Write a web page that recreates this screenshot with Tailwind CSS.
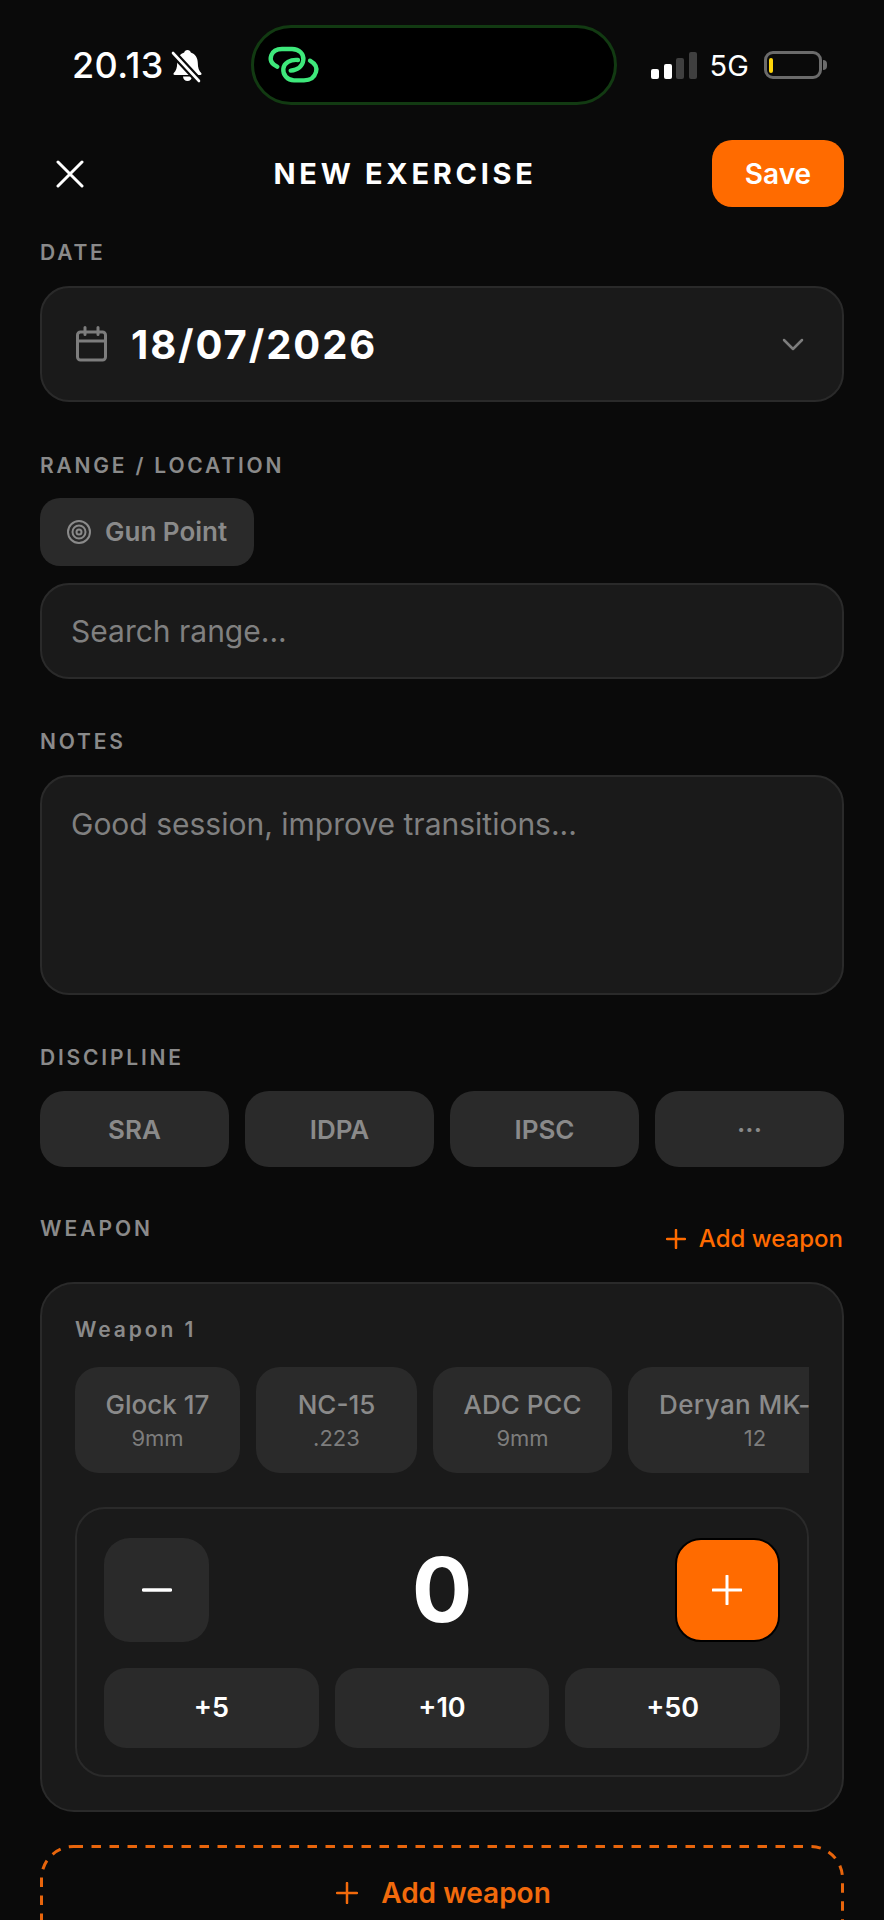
<!DOCTYPE html>
<html lang="en">
  <head>
    <meta charset="UTF-8" />
    <meta name="viewport" content="width=device-width, initial-scale=1.0" />
    <title>New Exercise</title>
    <script src="https://cdn.jsdelivr.net/npm/@tailwindcss/browser@4"></script>
  </head>
  <body class="bg-[#0a0a0a]">
    <div class="h-[1920px] w-[884px] overflow-hidden bg-[#0a0a0a] px-[40px] font-['Inter',sans-serif] text-white">
      <!-- status bar -->
      <div class="-mx-[40px] flex h-[105px] items-end">
        <div class="flex h-[80px] w-full items-center">
          <span class="ml-[72px] w-[92px] text-[36px] leading-none font-medium tracking-[0.400px]">20.13</span>
          <svg class="mt-[2px] h-[44px] w-[44px]" viewBox="0 0 44 44">
            <path d="M23.500 6c1.800 0 3 1 3.300 2.500 4.700 1.500 7 5.500 7 10.500 0 5 1.200 7.800 3.400 10 .8.900.3 2-.9 2H10.700c-1.200 0-1.700-1.100-.9-2 2.200-2.200 3.400-5 3.400-10 0-5 2.300-9 7-10.500.3-1.500 1.500-2.500 3.300-2.500z" fill="#fff"/>
            <path d="M19 32.500h9c0 2.600-2 4.500-4.500 4.500S19 35.100 19 32.500z" fill="#fff"/>
            <path d="M9 9l26 28" stroke="#0a0a0a" stroke-width="7"/>
            <path d="M9 9l26 28" stroke="#fff" stroke-width="2.600" stroke-linecap="round"/>
          </svg>
          <div class="ml-[43px] flex h-[80px] w-[366px] items-center rounded-full border-[3px] border-[#123a12] bg-black pl-[8px]">
            <svg class="h-[50px] w-[64px]" viewBox="0 0 192 150" fill="none" stroke="#3ee87b" stroke-width="13" stroke-linecap="round">
              <path d="M46 80C28 72 23 60 28 46C33 32 45 27 60 27L90 27C112 27 126 42 124 60C122 78 108 90 86 92"/>
              <path d="M108 60C85 58 66 68 64 86C62 104 76 121 96 121L126 121C146 121 158 110 162 96C166 82 158 70 144 62"/>
            </svg>
          </div>
          <div class="ml-[34px] flex h-[28px] items-end gap-[4.500px]">
            <span class="h-[10px] w-[8px] rounded-[2px] bg-white"></span>
            <span class="h-[15px] w-[8px] rounded-[2px] bg-white"></span>
            <span class="h-[21px] w-[8px] rounded-[2px] bg-[#3f3f3f]"></span>
            <span class="h-[27px] w-[8px] rounded-[2px] bg-[#3f3f3f]"></span>
          </div>
          <span class="ml-[13px] w-[39px] text-[29px] leading-none font-normal">5G</span>
          <div class="ml-[15px] flex h-[28px] w-[58px] items-center rounded-[9px] border-[3px] border-[#6b6b6b] pl-[2px]">
            <span class="h-[15px] w-[4px] rounded-full bg-[#ffd60a]"></span>
          </div>
          <span class="ml-[1px] h-[10px] w-[4px] rounded-r-full bg-[#6b6b6b]"></span>
        </div>
      </div>

      <!-- header -->
      <div class="mt-[35px] flex h-[67px] items-center">
        <div class="flex w-[58px] items-center">
          <svg class="ml-[16px] h-[28px] w-[28px]" viewBox="0 0 28 28" fill="none" stroke="#fff" stroke-width="3" stroke-linecap="round">
            <path d="M2 2l24 24M26 2L2 26"/>
          </svg>
        </div>
        <h1 class="flex-1 text-center text-[29px] leading-none font-bold tracking-[3.700px]">NEW EXERCISE</h1>
        <button class="h-[67px] w-[132px] rounded-[20px] bg-[#ff6b00] text-[28px] font-semibold">Save</button>
      </div>

      <!-- date -->
      <div class="mt-[33px] h-[24px] text-[21px] leading-[26px] font-semibold tracking-[2.800px] text-[#8a8a8a]">DATE</div>
      <div class="mt-[22px] flex h-[116px] items-center rounded-[29px] border-2 border-[#2a2a2a] bg-[#1a1a1a] pr-[38px] pl-[34px]">
        <svg class="h-[36px] w-[31px]" viewBox="0 0 31 36" fill="none" stroke="#7d7d7d" stroke-width="3" stroke-linecap="round" stroke-linejoin="round">
          <rect x="1.500" y="6" width="28" height="28" rx="3"/>
          <path d="M1.500 15h28M9 1.500v7M22 1.500v7"/>
        </svg>
        <span class="ml-[24px] flex-1 pt-[2px] text-[40px] leading-none font-bold tracking-[1.900px]">18/07/2026</span>
        <svg class="h-[13px] w-[22px]" viewBox="0 0 22 13" fill="none" stroke="#7d7d7d" stroke-width="2.500" stroke-linecap="round" stroke-linejoin="round">
          <path d="M2 2l9 9 9-9"/>
        </svg>
      </div>

      <!-- range -->
      <div class="mt-[51px] h-[24px] text-[21px] leading-[26px] font-semibold tracking-[2.800px] text-[#8a8a8a]">RANGE / LOCATION</div>
      <div class="mt-[21px] flex h-[68px] w-[214px] items-center rounded-[20px] bg-[#2a2a2a] pl-[27px]">
        <svg class="h-[24px] w-[24px]" viewBox="0 0 24 24" fill="none" stroke="#8a8a8a" stroke-width="2">
          <circle cx="12" cy="12" r="11"/>
          <circle cx="12" cy="12" r="6.500"/>
          <circle cx="12" cy="12" r="2.500"/>
        </svg>
        <span class="ml-[14px] text-[26px] leading-none font-semibold text-[#8a8a8a]">Gun Point</span>
      </div>
      <div class="mt-[17px] flex h-[96px] items-center rounded-[29px] border-2 border-[#2a2a2a] bg-[#1a1a1a] pl-[29px] text-[30px] text-[#808080]">Search range...</div>

      <!-- notes -->
      <div class="mt-[50px] h-[24px] text-[21px] leading-[26px] font-semibold tracking-[2.800px] text-[#8a8a8a]">NOTES</div>
      <div class="mt-[22px] h-[220px] rounded-[29px] border-2 border-[#2a2a2a] bg-[#1a1a1a] pt-[29px] pl-[29px] text-[30px] leading-[36px] text-[#808080]">Good session, improve transitions...</div>

      <!-- discipline -->
      <div class="mt-[50px] h-[24px] text-[21px] leading-[26px] font-semibold tracking-[2.800px] text-[#8a8a8a]">DISCIPLINE</div>
      <div class="mt-[22px] grid h-[76px] grid-cols-4 gap-[16px] text-[26px] font-semibold text-[#8a8a8a]">
        <button class="rounded-[24px] bg-[#2a2a2a]">SRA</button>
        <button class="rounded-[24px] bg-[#2a2a2a]">IDPA</button>
        <button class="rounded-[24px] bg-[#2a2a2a]">IPSC</button>
        <button class="rounded-[24px] bg-[#2a2a2a]">···</button>
      </div>

      <!-- weapon -->
      <div class="mt-[50px] flex items-start justify-between">
        <span class="text-[21px] leading-[24px] font-semibold tracking-[3px] text-[#8a8a8a]">WEAPON</span>
        <span class="mt-[5px] flex h-[34px] items-center pr-[1px] text-[24px] font-medium text-[#ff6b00]">
          <svg class="mr-[13px] h-[20px] w-[20px]" viewBox="0 0 20 20" fill="none" stroke="#ff6b00" stroke-width="2.500" stroke-linecap="round">
            <path d="M10 1v18M1 10h18"/>
          </svg>
          Add weapon
        </span>
      </div>

      <div class="mt-[26px] h-[530px] rounded-[34px] border-2 border-[#2a2a2a] bg-[#1a1a1a] px-[33px] pt-[34px]">
        <div class="h-[24px] text-[21px] leading-[24px] font-semibold tracking-[2.900px] text-[#8a8a8a]">Weapon 1</div>
        <div class="mt-[25px] flex h-[106px] gap-[16px] overflow-hidden">
          <div class="flex w-[165px] shrink-0 flex-col items-center justify-center rounded-[24px] bg-[#2a2a2a]">
            <span class="text-[26px] leading-[36px] font-medium text-[#8a8a8a]">Glock 17</span>
            <span class="text-[22px] leading-[31px] text-[#7d7d7d]">9mm</span>
          </div>
          <div class="flex w-[161px] shrink-0 flex-col items-center justify-center rounded-[24px] bg-[#2a2a2a]">
            <span class="text-[26px] leading-[36px] font-medium text-[#8a8a8a]">NC-15</span>
            <span class="text-[22px] leading-[31px] text-[#7d7d7d]">.223</span>
          </div>
          <div class="flex w-[179px] shrink-0 flex-col items-center justify-center rounded-[24px] bg-[#2a2a2a]">
            <span class="text-[26px] leading-[36px] font-medium text-[#8a8a8a]">ADC PCC</span>
            <span class="text-[22px] leading-[31px] text-[#7d7d7d]">9mm</span>
          </div>
          <div class="flex w-[254px] shrink-0 flex-col items-center justify-center rounded-[24px] bg-[#2a2a2a]">
            <span class="w-[192px] text-[26px] leading-[36px] font-medium tracking-[0.400px] whitespace-nowrap text-[#8a8a8a]">Deryan MK-12</span>
            <span class="text-[22px] leading-[31px] text-[#7d7d7d]">12</span>
          </div>
        </div>
        <div class="mt-[34px] h-[270px] rounded-[30px] border-2 border-[#2a2a2a] px-[27px] pt-[29px]">
          <div class="flex h-[104px] items-center justify-between">
            <button class="flex h-[104px] w-[105px] items-center justify-center rounded-[26px] bg-[#2a2a2a]">
              <svg class="h-[6px] w-[30px]" viewBox="0 0 30 6"><path d="M1.500 3h27" stroke="#fff" stroke-width="3.500" stroke-linecap="round"/></svg>
            </button>
            <span class="text-[90px] leading-none font-bold">0</span>
            <button class="flex h-[104px] w-[105px] items-center justify-center rounded-[26px] border-2 border-black bg-[#ff6b00]">
              <svg class="h-[30px] w-[30px]" viewBox="0 0 30 30" fill="none" stroke="#fff" stroke-width="3" stroke-linecap="round"><path d="M15 1v28M1 15h28"/></svg>
            </button>
          </div>
          <div class="mt-[26px] grid h-[80px] grid-cols-3 gap-[16px] text-[27px] font-semibold">
            <button class="rounded-[22px] bg-[#2a2a2a]">+5</button>
            <button class="rounded-[22px] bg-[#2a2a2a]">+10</button>
            <button class="rounded-[22px] bg-[#2a2a2a]">+50</button>
          </div>
        </div>
      </div>

      <!-- add weapon -->
      <div class="relative mt-[33px] flex h-[96px] items-center justify-center pl-[3px] text-[28px] font-semibold text-[#f26a0c]">
        <svg class="absolute inset-0 h-[96px] w-[804px]" viewBox="0 0 804 96" fill="none">
          <rect x="1.500" y="1.500" width="801" height="120" rx="32" stroke="#e8650c" stroke-width="3" stroke-dasharray="9.500 8.500"/>
        </svg>
        <svg class="mr-[23px] h-[22px] w-[22px]" viewBox="0 0 22 22" fill="none" stroke="#f26a0c" stroke-width="2.500" stroke-linecap="round">
          <path d="M11 1v20M1 11h20"/>
        </svg>
        Add weapon
      </div>
    </div>
  </body>
</html>
